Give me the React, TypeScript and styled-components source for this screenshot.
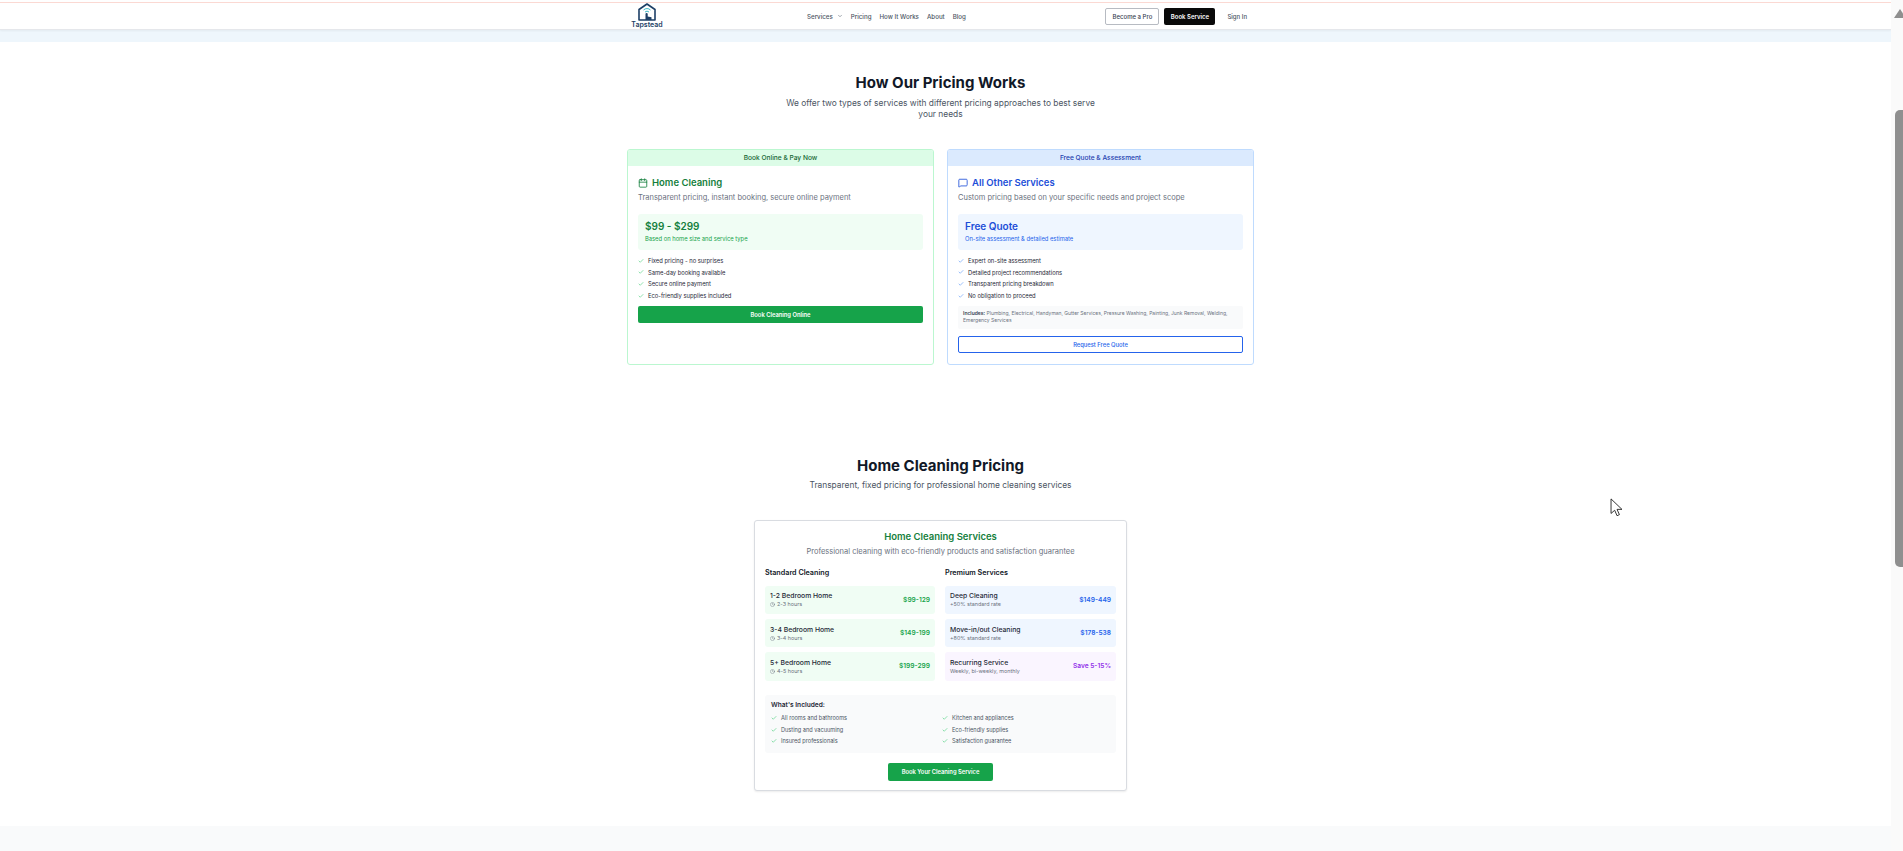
import { createGlobalStyle, styled } from "styled-components"
import { Calendar, Check, ChevronDown, Clock, MessageSquare } from "lucide-react"

const GlobalStyle = createGlobalStyle`
    html, body {
        margin: 0;
        height: 100%;
        overflow: hidden;
        background: #fff;
    }
    body {
        font-family: Inter, "Liberation Sans", sans-serif;
        color: #111827;
    }
    * {
        box-sizing: border-box;
    }
`

const Screen = styled.div`
    display: flex;
    height: 851px;
    overflow: hidden;
    position: relative;
`

const Page = styled.div`
    flex: 1;
    min-width: 0;
`

const ScrollTrack = styled.div`
    width: 12px;
    background: #fafafa;
    position: relative;
    overflow: hidden;
`

const ScrollThumb = styled.div`
    position: absolute;
    top: 110px;
    left: 4px;
    width: 12px;
    height: 457px;
    border-radius: 5px;
    background: #8f8f8f;
`

const ScrollArrow = styled.div`
    position: absolute;
    top: 9px;
    left: 3px;
    width: 0;
    height: 0;
    border-left: 6px solid transparent;
    border-right: 6px solid transparent;
    border-bottom: 9px solid #8f8f8f;
`

const TopLine = styled.div`
    height: 3px;
    border-bottom: 1px solid #fbd9d3;
`

const Header = styled.header`
    height: 27px;
    background: #fff;
    border-bottom: 1px solid #e5e7eb;
    box-shadow: 0 1px 2px rgba(0, 0, 0, 0.05);
    display: flex;
    align-items: center;
    padding-left: 632px;
    position: relative;
`

const Logo = styled.div`
    width: 30px;
    display: flex;
    flex-direction: column;
    align-items: center;
    margin-top: -1px;
`

const LogoText = styled.span`
    font-size: 7px;
    line-height: 8px;
    font-weight: 600;
    color: #1d3f66;
`

const Nav = styled.nav`
    display: flex;
    align-items: center;
    gap: 8px;
    margin-left: 145px;
`

const NavLink = styled.a`
    font-size: 6.2px;
    font-weight: 500;
    color: #4b5563;
    display: flex;
    align-items: center;
`

const NavChevron = styled(ChevronDown)`
    margin-left: 4px;
`

const Actions = styled.div`
    display: flex;
    align-items: center;
    margin-left: auto;
    margin-right: 644px;
`

const OutlineBtn = styled.button`
    width: 54px;
    height: 17px;
    padding: 0;
    font: 500 6px Inter, sans-serif;
    color: #374151;
    background: #fff;
    border: 1px solid #b7bbc2;
    border-radius: 2px;
`

const DarkBtn = styled.button`
    width: 51px;
    height: 17px;
    padding: 0;
    margin-left: 5px;
    font: 600 6px Inter, sans-serif;
    color: #fff;
    background: #0a0a0a;
    border: none;
    border-radius: 2px;
`

const SignIn = styled.a`
    font-size: 6px;
    font-weight: 500;
    color: #4b5563;
    margin-left: 12px;
`

const Band = styled.div`
    height: 12px;
    background: #eef6fc;
`

const Section = styled.section`
    display: flex;
    flex-direction: column;
    align-items: center;
    padding-right: 10px;
`

const HowSection = styled(Section)`
    padding-top: 30px;
`

const CleaningSection = styled(Section)`
    padding-top: 90px;
`

const Title = styled.h2`
    margin: 0;
    font-size: 15px;
    line-height: 21px;
    font-weight: 700;
    color: #111827;
    text-align: center;
`

const Lead = styled.p`
    margin: 5px 0 0;
    width: 320px;
    font-size: 8.4px;
    line-height: 11px;
    color: #4b5563;
    text-align: center;
`

const Plans = styled.div`
    display: grid;
    grid-template-columns: 307px 307px;
    gap: 13px;
    margin-top: 29px;
`

const PlanCard = styled.div<{ $tint: string }>`
    height: 216px;
    border: 1px solid ${(p) => p.$tint};
    border-radius: 3px;
    overflow: hidden;
    background: #fff;
`

const Ribbon = styled.div<{ $bg: string; $fg: string }>`
    height: 16px;
    background: ${(p) => p.$bg};
    color: ${(p) => p.$fg};
    font-size: 6.6px;
    font-weight: 500;
    line-height: 16px;
    text-align: center;
`

const PlanBody = styled.div`
    padding: 10px 10px 0;
`

const PlanTitle = styled.h3<{ $fg: string }>`
    margin: 0;
    display: flex;
    align-items: center;
    gap: 4px;
    font-size: 9.5px;
    line-height: 13px;
    font-weight: 600;
    color: ${(p) => p.$fg};
`

const PlanSub = styled.p`
    margin: 2.5px 0 0;
    font-size: 7.5px;
    line-height: 11px;
    color: #6b7280;
`

const PriceBox = styled.div<{ $bg: string }>`
    margin-top: 11.5px;
    height: 36px;
    padding: 5.5px 7px 0;
    border-radius: 3px;
    background: ${(p) => p.$bg};
`

const PriceValue = styled.div<{ $fg: string }>`
    font-size: 10px;
    line-height: 13px;
    font-weight: 600;
    color: ${(p) => p.$fg};
`

const PriceNote = styled.div<{ $fg: string }>`
    margin-top: 2.5px;
    font-size: 5.8px;
    line-height: 8px;
    color: ${(p) => p.$fg};
`

const Features = styled.ul`
    list-style: none;
    margin: 5.3px 0 0;
    padding: 0;
`

const Feature = styled.li`
    display: flex;
    align-items: center;
    gap: 4px;
    height: 11px;
    margin-bottom: 0.6px;
    font-size: 5.8px;
    color: #1f2937;
`

const WideBtn = styled.button`
    display: block;
    width: 100%;
    height: 17px;
    margin-top: 5px;
    padding: 0;
    font: 600 5.8px Inter, sans-serif;
    color: #fff;
    background: #16a34a;
    border: none;
    border-radius: 2px;
`

const IncludesNote = styled.div`
    margin-top: 5px;
    height: 23px;
    padding: 4px 5px 0;
    border-radius: 2px;
    background: #f9fafb;
    font-size: 5px;
    line-height: 7px;
    color: #6b7280;

    b {
        font-weight: 600;
        color: #374151;
    }
`

const QuoteBtn = styled.button`
    display: block;
    width: 100%;
    height: 17px;
    margin-top: 7px;
    padding: 0;
    font: 500 5.8px Inter, sans-serif;
    color: #2563eb;
    background: #fff;
    border: 1px solid #2563eb;
    border-radius: 2px;
`

const SectionLead = styled(Lead)`
    width: auto;
    margin-top: 4px;
`

const PricingCard = styled.div`
    width: 373px;
    height: 271px;
    margin-top: 29px;
    padding: 10px 10px 0;
    border: 1px solid #d9dce1;
    border-radius: 3px;
    background: #fff;
    box-shadow: 0 1px 2px rgba(0, 0, 0, 0.08);
`

const PricingHead = styled.h3`
    margin: 0;
    font-size: 9.5px;
    line-height: 12px;
    font-weight: 600;
    color: #15803d;
    text-align: center;
`

const PricingSub = styled.p`
    margin: 2.5px 0 0;
    font-size: 7.5px;
    line-height: 11px;
    color: #6b7280;
    text-align: center;
`

const PriceColumns = styled.div`
    display: grid;
    grid-template-columns: 170px 171px;
    gap: 10px;
    margin-top: 11px;
`

const ColumnTitle = styled.h4`
    margin: 0 0 8px;
    font-size: 7.2px;
    line-height: 10px;
    font-weight: 600;
    color: #111827;
`

const PriceRow = styled.div<{ $bg: string }>`
    display: flex;
    align-items: center;
    justify-content: space-between;
    height: 28.4px;
    margin-bottom: 5px;
    padding: 0 5px;
    border-radius: 3px;
    background: ${(p) => p.$bg};
`

const RowName = styled.div`
    font-size: 6.8px;
    line-height: 9px;
    font-weight: 500;
    color: #1f2937;
`

const RowMeta = styled.div`
    display: flex;
    align-items: center;
    gap: 2px;
    margin-top: 1px;
    font-size: 5.4px;
    line-height: 7px;
    color: #6b7280;
`

const RowPrice = styled.div<{ $fg: string }>`
    font-size: 6.6px;
    font-weight: 600;
    color: ${(p) => p.$fg};
`

const Included = styled.div`
    height: 58px;
    margin-top: 9px;
    padding: 6px 6px 0;
    border-radius: 3px;
    background: #f9fafb;
`

const IncludedTitle = styled.h5`
    margin: 0 0 3px;
    font-size: 6.6px;
    line-height: 9px;
    font-weight: 600;
    color: #1f2937;
`

const IncludedGrid = styled.ul`
    list-style: none;
    margin: 0;
    padding: 0;
    display: grid;
    grid-template-columns: 171px 1fr;
`

const IncludedItem = styled.li`
    display: flex;
    align-items: center;
    gap: 4px;
    height: 11.5px;
    font-size: 5.6px;
    color: #4b5563;
`

const BookBtn = styled.button`
    display: block;
    width: 105px;
    height: 18px;
    margin: 10px auto 0;
    padding: 0;
    font: 600 5.8px Inter, sans-serif;
    color: #fff;
    background: #16a34a;
    border: none;
    border-radius: 2px;
`

const FooterBand = styled.div`
    height: 40px;
    margin-top: 35px;
    background: #f9fafb;
`

const CursorWrap = styled.svg`
    position: absolute;
    left: 1610px;
    top: 498px;
`

const green = "#16a34a"
const blue = "#2563eb"

function Tick({ color }: { color: string }) {
    return <Check size={6} color={color} strokeWidth={2} />
}

function LogoMark() {
    return (
        <svg width="20" height="18" viewBox="0 0 20 18" fill="none">
            <path d="M2 17V6.5L10 1l8 5.5V17z" stroke="#1d3f66" strokeWidth="1.6" strokeLinejoin="round" />
            <path d="M6.5 7a5 5 0 0 1 7 0M8 9a3 3 0 0 1 4 0" stroke="#3fb8c4" strokeWidth="1" />
            <path d="M8.5 17v-6a1.1 1.1 0 0 1 2.2 0v2.5l3.8.8V17z" fill="#1d3f66" />
        </svg>
    )
}

export default function App() {
    return (
        <Screen>
            <GlobalStyle />
            <Page>
                <TopLine />
                <Header>
                    <Logo>
                        <LogoMark />
                        <LogoText>Tapstead</LogoText>
                    </Logo>
                    <Nav>
                        <NavLink>
                            Services
                            <NavChevron size={6} />
                        </NavLink>
                        <NavLink>Pricing</NavLink>
                        <NavLink>How It Works</NavLink>
                        <NavLink>About</NavLink>
                        <NavLink>Blog</NavLink>
                    </Nav>
                    <Actions>
                        <OutlineBtn>Become a Pro</OutlineBtn>
                        <DarkBtn>Book Service</DarkBtn>
                        <SignIn>Sign In</SignIn>
                    </Actions>
                </Header>
                <Band />

                <HowSection>
                    <Title>How Our Pricing Works</Title>
                    <Lead>We offer two types of services with different pricing approaches to best serve your needs</Lead>
                    <Plans>
                        <PlanCard $tint="#bbf7d0">
                            <Ribbon $bg="#dcfce7" $fg="#166534">Book Online &amp; Pay Now</Ribbon>
                            <PlanBody>
                                <PlanTitle $fg="#15803d">
                                    <Calendar size={10} />
                                    Home Cleaning
                                </PlanTitle>
                                <PlanSub>Transparent pricing, instant booking, secure online payment</PlanSub>
                                <PriceBox $bg="#f0fdf4">
                                    <PriceValue $fg="#15803d">$99 - $299</PriceValue>
                                    <PriceNote $fg={green}>Based on home size and service type</PriceNote>
                                </PriceBox>
                                <Features>
                                    <Feature><Tick color="#22c55e" />Fixed pricing - no surprises</Feature>
                                    <Feature><Tick color="#22c55e" />Same-day booking available</Feature>
                                    <Feature><Tick color="#22c55e" />Secure online payment</Feature>
                                    <Feature><Tick color="#22c55e" />Eco-friendly supplies included</Feature>
                                </Features>
                                <WideBtn>Book Cleaning Online</WideBtn>
                            </PlanBody>
                        </PlanCard>
                        <PlanCard $tint="#bfdbfe">
                            <Ribbon $bg="#dbeafe" $fg="#1e40af">Free Quote &amp; Assessment</Ribbon>
                            <PlanBody>
                                <PlanTitle $fg="#1d4ed8">
                                    <MessageSquare size={10} />
                                    All Other Services
                                </PlanTitle>
                                <PlanSub>Custom pricing based on your specific needs and project scope</PlanSub>
                                <PriceBox $bg="#eff6ff">
                                    <PriceValue $fg="#1d4ed8">Free Quote</PriceValue>
                                    <PriceNote $fg={blue}>On-site assessment &amp; detailed estimate</PriceNote>
                                </PriceBox>
                                <Features>
                                    <Feature><Tick color="#3b82f6" />Expert on-site assessment</Feature>
                                    <Feature><Tick color="#3b82f6" />Detailed project recommendations</Feature>
                                    <Feature><Tick color="#3b82f6" />Transparent pricing breakdown</Feature>
                                    <Feature><Tick color="#3b82f6" />No obligation to proceed</Feature>
                                </Features>
                                <IncludesNote>
                                    <b>Includes:</b> Plumbing, Electrical, Handyman, Gutter Services, Pressure Washing, Painting, Junk Removal, Welding, Emergency Services
                                </IncludesNote>
                                <QuoteBtn>Request Free Quote</QuoteBtn>
                            </PlanBody>
                        </PlanCard>
                    </Plans>
                </HowSection>

                <CleaningSection>
                    <Title>Home Cleaning Pricing</Title>
                    <SectionLead>Transparent, fixed pricing for professional home cleaning services</SectionLead>
                    <PricingCard>
                        <PricingHead>Home Cleaning Services</PricingHead>
                        <PricingSub>Professional cleaning with eco-friendly products and satisfaction guarantee</PricingSub>
                        <PriceColumns>
                            <div>
                                <ColumnTitle>Standard Cleaning</ColumnTitle>
                                <PriceRow $bg="#f0fdf4">
                                    <div>
                                        <RowName>1-2 Bedroom Home</RowName>
                                        <RowMeta><Clock size={5} />2-3 hours</RowMeta>
                                    </div>
                                    <RowPrice $fg={green}>$99-129</RowPrice>
                                </PriceRow>
                                <PriceRow $bg="#f0fdf4">
                                    <div>
                                        <RowName>3-4 Bedroom Home</RowName>
                                        <RowMeta><Clock size={5} />3-4 hours</RowMeta>
                                    </div>
                                    <RowPrice $fg={green}>$149-199</RowPrice>
                                </PriceRow>
                                <PriceRow $bg="#f0fdf4">
                                    <div>
                                        <RowName>5+ Bedroom Home</RowName>
                                        <RowMeta><Clock size={5} />4-5 hours</RowMeta>
                                    </div>
                                    <RowPrice $fg={green}>$199-299</RowPrice>
                                </PriceRow>
                            </div>
                            <div>
                                <ColumnTitle>Premium Services</ColumnTitle>
                                <PriceRow $bg="#eff6ff">
                                    <div>
                                        <RowName>Deep Cleaning</RowName>
                                        <RowMeta>+50% standard rate</RowMeta>
                                    </div>
                                    <RowPrice $fg={blue}>$149-449</RowPrice>
                                </PriceRow>
                                <PriceRow $bg="#eff6ff">
                                    <div>
                                        <RowName>Move-in/out Cleaning</RowName>
                                        <RowMeta>+80% standard rate</RowMeta>
                                    </div>
                                    <RowPrice $fg={blue}>$178-538</RowPrice>
                                </PriceRow>
                                <PriceRow $bg="#faf5ff">
                                    <div>
                                        <RowName>Recurring Service</RowName>
                                        <RowMeta>Weekly, bi-weekly, monthly</RowMeta>
                                    </div>
                                    <RowPrice $fg="#9333ea">Save 5-15%</RowPrice>
                                </PriceRow>
                            </div>
                        </PriceColumns>
                        <Included>
                            <IncludedTitle>What's Included:</IncludedTitle>
                            <IncludedGrid>
                                <IncludedItem><Tick color="#22c55e" />All rooms and bathrooms</IncludedItem>
                                <IncludedItem><Tick color="#22c55e" />Kitchen and appliances</IncludedItem>
                                <IncludedItem><Tick color="#22c55e" />Dusting and vacuuming</IncludedItem>
                                <IncludedItem><Tick color="#22c55e" />Eco-friendly supplies</IncludedItem>
                                <IncludedItem><Tick color="#22c55e" />Insured professionals</IncludedItem>
                                <IncludedItem><Tick color="#22c55e" />Satisfaction guarantee</IncludedItem>
                            </IncludedGrid>
                        </Included>
                        <BookBtn>Book Your Cleaning Service</BookBtn>
                    </PricingCard>
                </CleaningSection>
                <FooterBand />
            </Page>
            <ScrollTrack>
                <ScrollArrow />
                <ScrollThumb />
            </ScrollTrack>
            <CursorWrap width="13" height="20" viewBox="0 0 14 22">
                <path d="M1 1v16l4-3.5 2.6 6 2.6-1.2-2.6-5.8H13z" fill="#fff" stroke="#222" strokeWidth="1" strokeLinejoin="round" />
            </CursorWrap>
        </Screen>
    )
}
